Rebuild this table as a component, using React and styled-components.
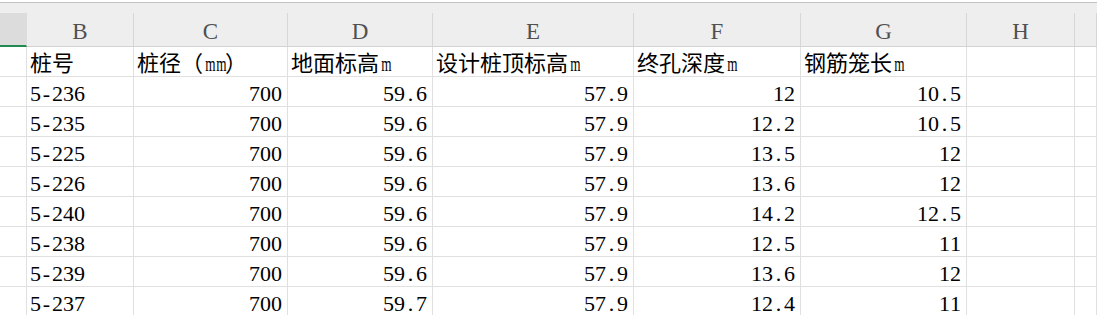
import React from "react";
import styled, { createGlobalStyle } from "styled-components";

const GlobalStyle = createGlobalStyle`
  html, body { margin: 0; padding: 0; background: #ffffff; overflow: hidden; }
`;

const Sheet = styled.div`
  display: grid;
  grid-template-columns: 27px 107px 154px 145px 201px 167px 166px 108px 1fr;
  padding-top: 2px;
  width: 1097px;
`;

const TopStrip = styled.div`
  grid-column: 1 / -1;
  height: 10px;
  background: #eeeeee;
  border-top: 1px solid #c3c3c3;
`;

const ColHead = styled.div`
  box-sizing: border-box;
  height: 34px;
  background: ${(p) => (p.$corner ? "#dcdcdc" : "#eeeeee")};
  border-right: 1px solid ${(p) => (p.$corner ? "#dcdcdc" : "#d6d6d6")};
  border-bottom: ${(p) => (p.$corner ? "2px solid #1f8b50" : "1px solid #d2d2d2")};
  font-family: "Liberation Serif", "Times New Roman", serif;
  font-size: 23px;
  line-height: 37px;
  color: #505050;
  text-align: center;
  overflow: hidden;
`;

const Cell = styled.div`
  box-sizing: border-box;
  height: 30px;
  border-right: 1px solid #e0e0e0;
  border-bottom: 1px solid #e0e0e0;
  padding: 0 ${(p) => (p.$align === "right" ? "5px" : "3px")};
  text-align: ${(p) => p.$align || "left"};
  font-family: "Liberation Serif", "Noto Sans CJK SC", serif;
  font-size: 22px;
  line-height: 33px;
  color: #000000;
  white-space: nowrap;
  overflow: hidden;
`;

const Half = styled.span`
  display: inline-block;
  width: 0.5em;
  text-align: center;
  transform: ${(p) => (p.$narrow ? "scaleX(0.6)" : "none")};
`;

const halfWidth = (s) =>
  s.split("").map((ch, i) =>
    /[\x20-\x7e]/.test(ch) ? (
      <Half key={i} $narrow={/[a-z]/.test(ch)}>
        {ch}
      </Half>
    ) : (
      <React.Fragment key={i}>{ch}</React.Fragment>
    )
  );

const letters = ["", "B", "C", "D", "E", "F", "G", "H", ""];
const titles = ["桩号", "桩径（mm）", "地面标高m", "设计桩顶标高m", "终孔深度m", "钢筋笼长m"];
const rows = [
  ["5-236", "700", "59.6", "57.9", "12", "10.5"],
  ["5-235", "700", "59.6", "57.9", "12.2", "10.5"],
  ["5-225", "700", "59.6", "57.9", "13.5", "12"],
  ["5-226", "700", "59.6", "57.9", "13.6", "12"],
  ["5-240", "700", "59.6", "57.9", "14.2", "12.5"],
  ["5-238", "700", "59.6", "57.9", "12.5", "11"],
  ["5-239", "700", "59.6", "57.9", "13.6", "12"],
  ["5-237", "700", "59.7", "57.9", "12.4", "11"],
];

export default function App() {
  return (
    <>
      <GlobalStyle />
      <Sheet>
        <TopStrip />
        {letters.map((l, i) => (
          <ColHead key={"h" + i} $corner={i === 0}>
            {l}
          </ColHead>
        ))}
        <Cell />
        {titles.map((t, i) => (
          <Cell key={"t" + i}>{halfWidth(t)}</Cell>
        ))}
        <Cell />
        <Cell />
        {rows.map((r, ri) => (
          <React.Fragment key={"r" + ri}>
            <Cell />
            {r.map((v, ci) => (
              <Cell key={ci} $align={ci === 0 ? "left" : "right"}>
                {halfWidth(v)}
              </Cell>
            ))}
            <Cell />
            <Cell />
          </React.Fragment>
        ))}
      </Sheet>
    </>
  );
}
